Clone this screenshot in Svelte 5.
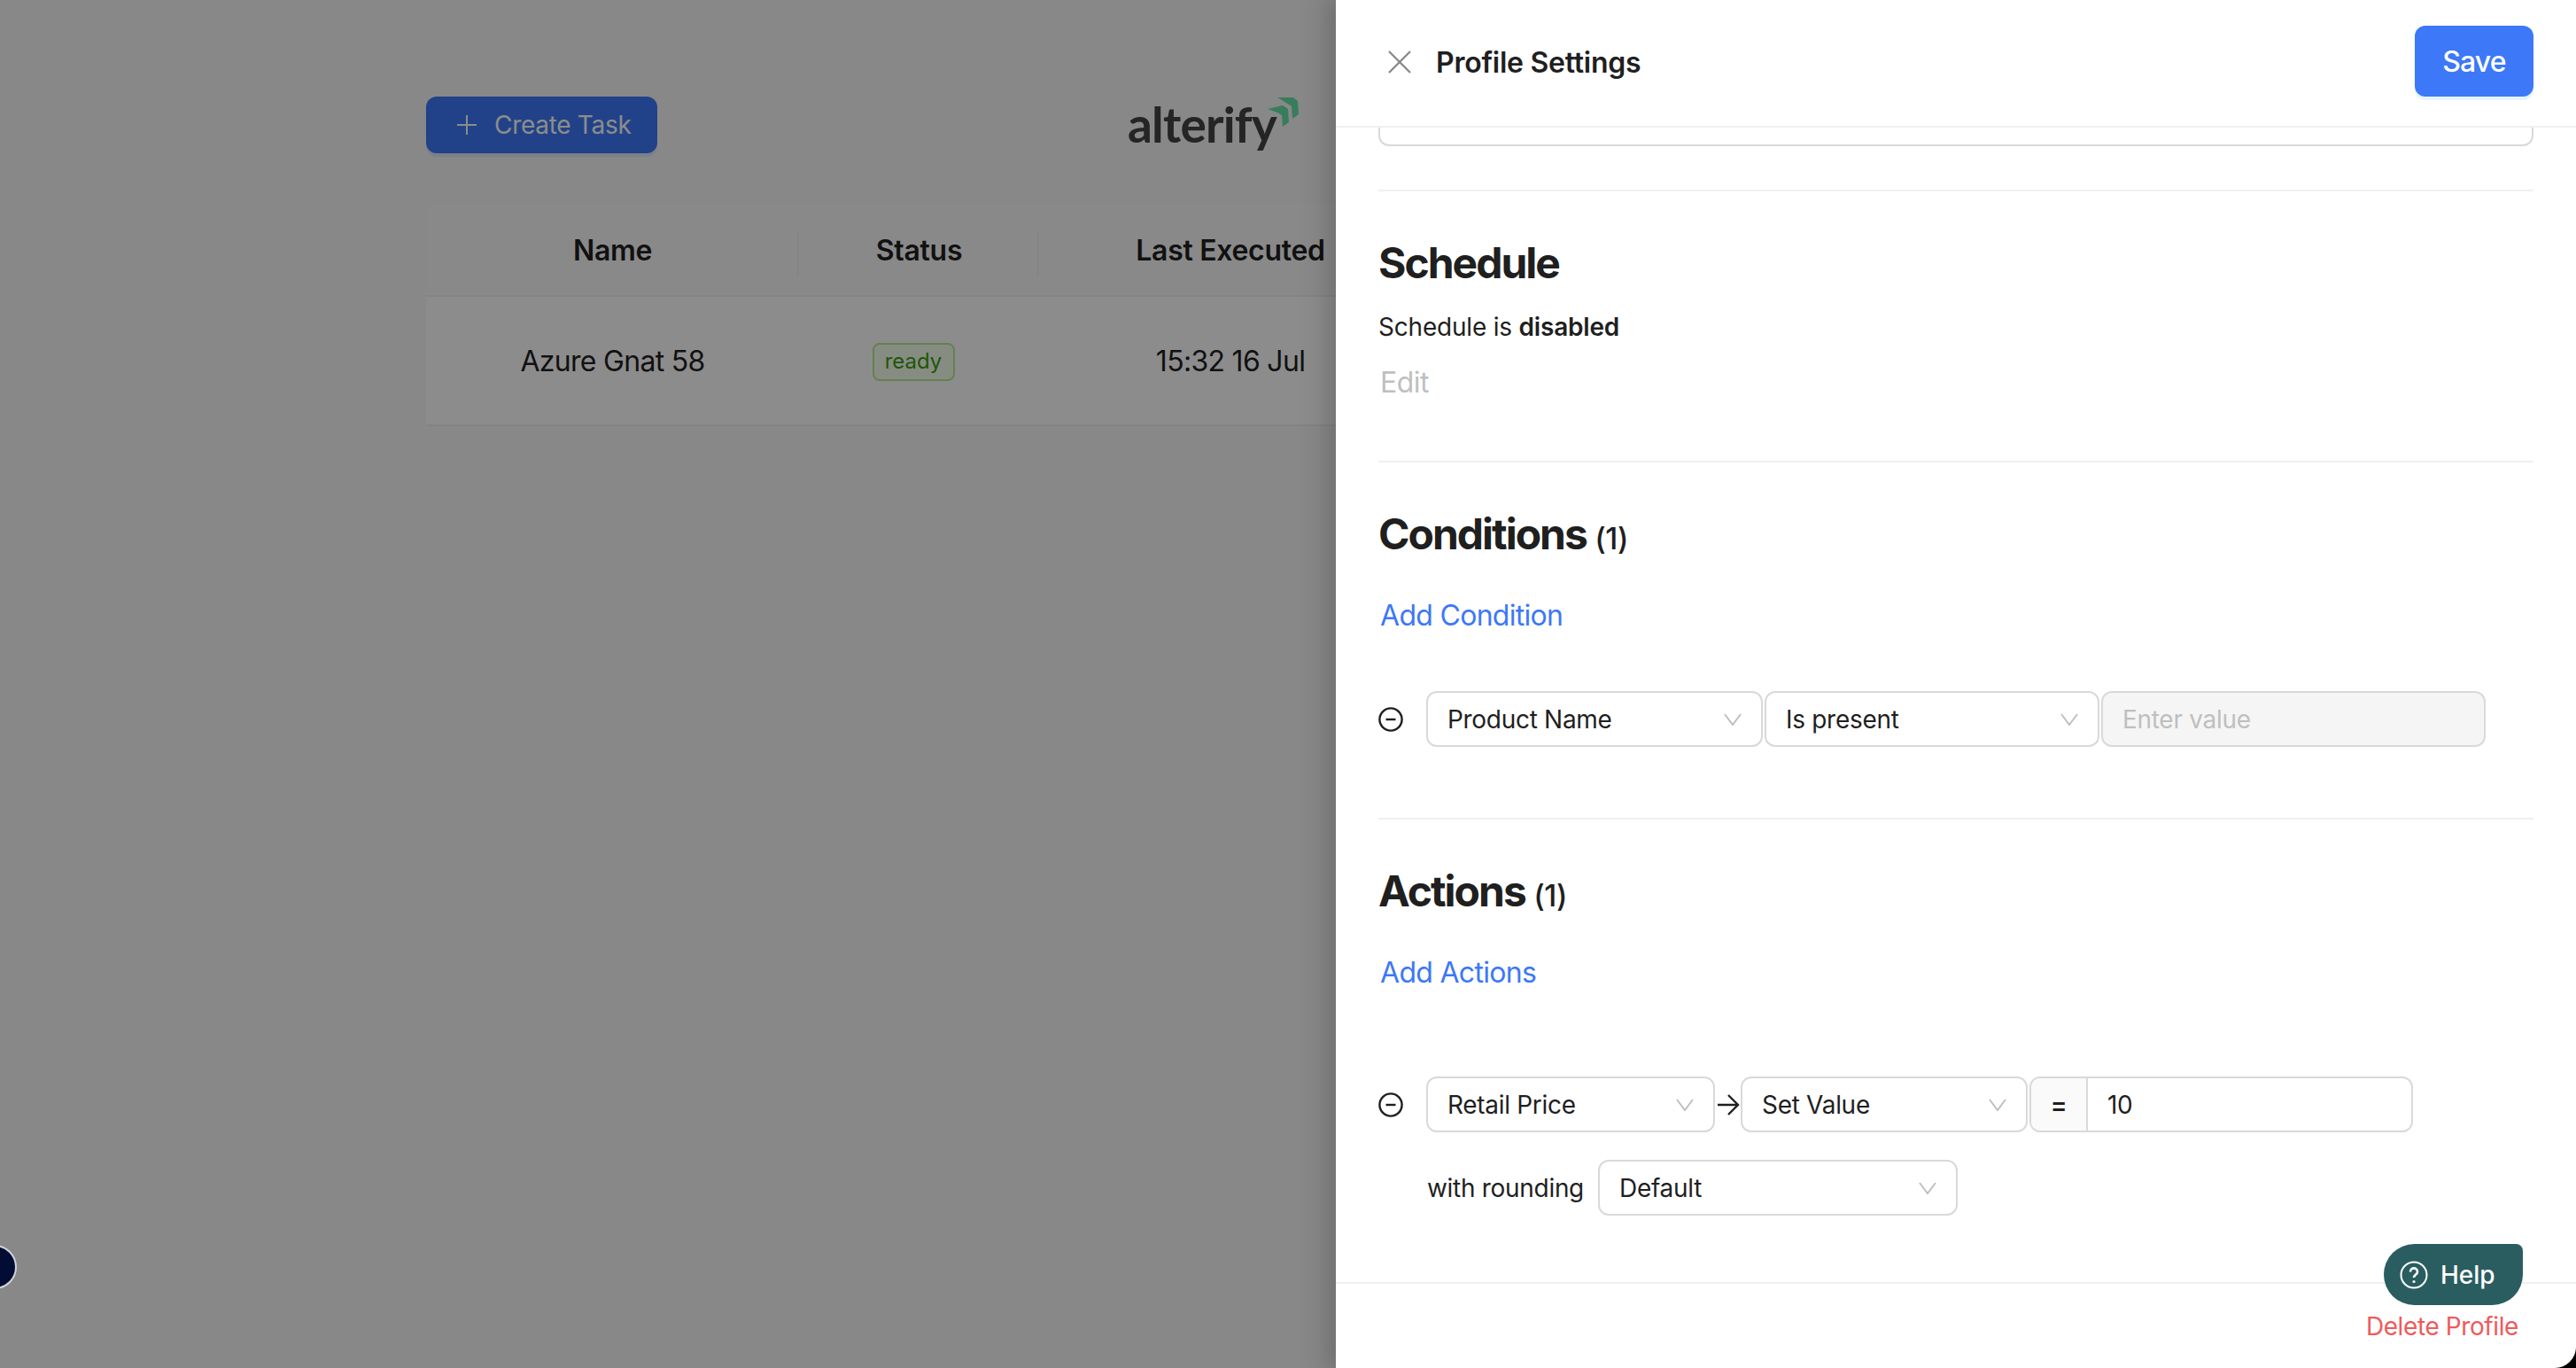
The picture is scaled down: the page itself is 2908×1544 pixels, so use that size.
<script lang="ts">
  const columns = ["Name", "Status", "Last Executed"];
</script>

{#snippet chevron()}
  <svg class="chev" viewBox="0 0 20 14" fill="none" stroke="currentColor" stroke-width="2"><path d="M1 1l9 12 9-12" /></svg>
{/snippet}

{#snippet select(label: string, cls: string)}
  <div class="field select {cls}">
    <span>{label}</span>
    {@render chevron()}
  </div>
{/snippet}

{#snippet minus()}
  <svg class="minus" viewBox="0 0 28 28" fill="none" stroke="#1f1f1f" stroke-width="2.4">
    <circle cx="14" cy="14" r="12.6" />
    <path d="M8.5 14h11" />
  </svg>
{/snippet}

<div class="page">
  <div class="behind">
    <div class="toolbar">
      <button class="create">
        <svg viewBox="0 0 24 24" fill="none" stroke="#fff" stroke-width="2"><path d="M12 1v22M1 12h22" /></svg>
        Create Task
      </button>
      <div class="logo">
        <span>alterify</span>
        <svg viewBox="0 0 36 36" fill="#66e3a7">
          <path d="M11 0h18l5 4 1 15-7 5-1-14-6-4z" />
          <path d="M0 13l17-4 6 4 1 15-7 5-1-13-5-3z" />
        </svg>
      </div>
    </div>
    <div class="table">
      <div class="thead">
        {#each columns as c, i}
          <div class="th" class:divided={i < 2}>{c}</div>
        {/each}
      </div>
      <div class="tbody">
        <div class="td">Azure Gnat 58</div>
        <div class="td status"><span class="badge">ready</span></div>
        <div class="td">15:32 16 Jul</div>
      </div>
    </div>
    <div class="mask"></div>
    <div class="bubble"></div>
  </div>

  <aside class="drawer">
    <header>
      <svg class="close" viewBox="0 0 26 26" fill="none" stroke="#8a8a8a" stroke-width="2.4"><path d="M1 1l24 24M25 1L1 25" /></svg>
      <h2>Profile Settings</h2>
      <button class="save">Save</button>
    </header>

    <div class="body">
      <div class="cutoff"></div>

      <section class="schedule">
        <h3>Schedule</h3>
        <p>Schedule is <b>disabled</b></p>
        <div class="edit">Edit</div>
      </section>

      <section class="conditions">
        <h3>Conditions <small>(1)</small></h3>
        <div class="link">Add Condition</div>
        <div class="row first">
          {@render minus()}
          {@render select("Product Name", "w380")}
          {@render select("Is present", "w378")}
          <div class="field disabled">Enter value</div>
        </div>
      </section>

      <section class="actions">
        <h3>Actions <small>(1)</small></h3>
        <div class="link">Add Actions</div>
        <div class="row second">
          {@render minus()}
          {@render select("Retail Price", "w326")}
          <svg class="arrow" viewBox="0 0 26 26" fill="none" stroke="#1f1f1f" stroke-width="2.4"><path d="M1 13h23M13 2l11 11-11 11" /></svg>
          {@render select("Set Value", "w324")}
          <div class="field group">
            <span class="addon">=</span>
            <span class="val">10</span>
          </div>
        </div>
        <div class="rounding">
          <span>with rounding</span>
          {@render select("Default", "w406")}
        </div>
      </section>
    </div>

    <footer>
      <span class="delete">Delete Profile</span>
    </footer>

    <button class="help">
      <svg viewBox="0 0 32 32" fill="none" stroke="#fff" stroke-width="2"><circle cx="16" cy="16" r="14.5" /><path d="M12 12.5c0-5.5 8-5.5 8 0 0 3-4 3-4 6.5" stroke-width="2.6" /><circle cx="16" cy="23.5" r="1.6" fill="#fff" stroke="none" /></svg>
      Help
    </button>
  </aside>
</div>

<style>
  :global(body) {
    background: #000;
    font-family: Inter, "Liberation Sans", sans-serif;
    color: #1f1f1f;
  }
  .page {
    display: flex;
    width: 2908px;
    height: 1544px;
    overflow: hidden;
  }
  .behind {
    position: relative;
    flex: 0 0 1508px;
    box-sizing: border-box;
    padding: 109px 0 0 481px;
    background: #f7f7f7;
    overflow: hidden;
  }
  .mask {
    position: absolute;
    inset: 0;
    background: rgba(0, 0, 0, 0.45);
  }
  .bubble {
    position: absolute;
    left: -31px;
    top: 1405px;
    width: 46px;
    height: 46px;
    border: 2px solid #cfd3de;
    border-radius: 50%;
    background: #030d33;
  }
  .toolbar {
    display: flex;
    height: 64px;
    gap: 531px;
  }
  .create {
    display: flex;
    align-items: center;
    gap: 19px;
    width: 261px;
    height: 64px;
    padding: 0 0 0 34px;
    border: none;
    border-radius: 12px;
    background: #3c78f8;
    box-shadow: 0 4px 0 rgba(5, 145, 255, 0.1);
    color: #fff;
    font: 400 28px Inter, sans-serif;
    letter-spacing: -0.3px;
    white-space: nowrap;
  }
  .create svg {
    width: 24px;
    height: 24px;
  }
  .logo {
    display: flex;
    align-items: flex-start;
    height: 80px;
    color: #444;
    font: 700 55px/64px Lato, sans-serif;
  }
  .logo span {
    margin-top: -1px;
    letter-spacing: -0.8px;
  }
  .logo svg {
    width: 36px;
    height: 36px;
    margin: 1px 0 0 -10px;
    flex: none;
  }
  .table {
    width: 1500px;
    margin-top: 57px;
    border-radius: 16px 16px 0 0;
    background: #fff;
  }
  .thead,
  .tbody {
    display: grid;
    grid-template-columns: 421px 271px 432px;
  }
  .thead {
    box-sizing: border-box;
    height: 105px;
    padding-top: 2px;
    align-items: center;
    background: #fafafa;
    border-bottom: 2px solid #f0f0f0;
    border-radius: 16px 16px 0 0;
  }
  .th {
    position: relative;
    text-align: center;
    font-weight: 600;
    font-size: 32px;
    letter-spacing: -0.3px;
  }
  .divided::after {
    content: "";
    position: absolute;
    right: 0;
    top: -2px;
    height: 50px;
    width: 2px;
    background: #f0f0f0;
  }
  .tbody {
    height: 144px;
    align-items: center;
    border-bottom: 2px solid #f0f0f0;
  }
  .td {
    text-align: center;
    font-size: 32px;
    letter-spacing: -0.7px;
  }
  .status {
    padding-right: 13px;
  }
  .badge {
    display: inline-block;
    box-sizing: border-box;
    width: 93px;
    height: 43px;
    border: 2px solid #b7eb8f;
    border-radius: 8px;
    background: #f6ffed;
    color: #389e0d;
    font-size: 24px;
    line-height: 38px;
    letter-spacing: 0;
  }

  .drawer {
    position: relative;
    display: flex;
    flex-direction: column;
    flex: 0 0 1400px;
    background: #fff;
    border-bottom-right-radius: 24px;
    box-shadow: -9px 0 28px 8px rgba(0, 0, 0, 0.1), -6px 0 16px rgba(0, 0, 0, 0.08);
  }
  header {
    display: flex;
    align-items: center;
    box-sizing: border-box;
    height: 144px;
    flex: none;
    padding: 0 48px 2px 59px;
    border-bottom: 2px solid #f0f0f0;
  }
  .close {
    width: 26px;
    height: 26px;
    margin-right: 28px;
  }
  h2 {
    flex: 1;
    margin: 0;
    font-size: 32px;
    font-weight: 600;
    letter-spacing: -0.25px;
  }
  .save {
    width: 134px;
    height: 80px;
    margin-bottom: 2px;
    border: none;
    border-radius: 12px;
    background: #3c78f8;
    box-shadow: 0 4px 0 rgba(5, 145, 255, 0.1);
    color: #fff;
    font: 500 32px Inter, sans-serif;
    letter-spacing: -0.8px;
  }
  .body {
    flex: 1;
    padding: 0 48px;
    overflow: hidden;
  }
  .cutoff {
    height: 19px;
    border: 2px solid #d9d9d9;
    border-top: none;
    border-radius: 0 0 12px 12px;
  }
  section {
    border-top: 2px solid #f0f0f0;
  }
  .schedule {
    height: 306px;
    margin-top: 49px;
    box-sizing: border-box;
  }
  .conditions {
    height: 403px;
    box-sizing: border-box;
  }
  h3 {
    margin: 52px 0 0;
    font-size: 48px;
    line-height: 58px;
    font-weight: 700;
    letter-spacing: -2px;
  }
  h3 small {
    font-size: 34px;
    font-weight: 500;
    letter-spacing: -0.5px;
  }
  .schedule p {
    margin: 23px 0 0;
    font-size: 28px;
    line-height: 40px;
    letter-spacing: -0.2px;
  }
  .schedule b {
    font-weight: 600;
  }
  .edit {
    margin: 23px 0 0 2px;
    color: #bfbfbf;
    font-size: 32px;
    line-height: 40px;
    letter-spacing: -0.5px;
  }
  .link {
    margin: 38px 0 0 2px;
    color: #3c78f8;
    font-size: 32px;
    line-height: 40px;
    letter-spacing: -0.7px;
  }
  .row {
    display: flex;
    align-items: center;
    gap: 2px;
  }
  .first {
    margin-top: 65px;
  }
  .second {
    margin-top: 97px;
  }
  .minus {
    width: 28px;
    height: 28px;
    margin-right: 24px;
    flex: none;
  }
  .field {
    display: flex;
    align-items: center;
    box-sizing: border-box;
    height: 63px;
    padding: 0 22px;
    border: 2px solid #d9d9d9;
    border-radius: 12px;
    font-size: 28px;
    letter-spacing: -0.3px;
    background: #fff;
  }
  .select {
    justify-content: space-between;
  }
  .chev {
    width: 20px;
    height: 14px;
    color: #bfbfbf;
  }
  .w380 { width: 380px; }
  .w378 { width: 378px; }
  .w326 { width: 326px; }
  .w324 { width: 324px; }
  .w406 { width: 406px; }
  .disabled {
    width: 434px;
    background: #f5f5f5;
    color: #bfbfbf;
  }
  .arrow {
    width: 26px;
    height: 26px;
    flex: none;
    margin-right: -1px;
  }
  .group {
    width: 433px;
    padding: 0;
    overflow: hidden;
  }
  .addon {
    display: flex;
    align-items: center;
    justify-content: center;
    box-sizing: border-box;
    width: 64px;
    height: 100%;
    border-right: 2px solid #d9d9d9;
    background: #fafafa;
    font-weight: 600;
  }
  .val {
    padding-left: 22px;
  }
  .rounding {
    display: flex;
    align-items: center;
    gap: 16px;
    margin: 31px 0 0 55px;
    font-size: 28px;
    letter-spacing: -0.3px;
  }
  footer {
    display: flex;
    align-items: center;
    justify-content: flex-end;
    box-sizing: border-box;
    height: 97px;
    flex: none;
    padding: 0 65px 0 0;
    border-top: 2px solid #f0f0f0;
  }
  .delete {
    color: #f05a5a;
    font-size: 28px;
    letter-spacing: -0.4px;
  }
  .help {
    position: absolute;
    left: 1183px;
    top: 1404px;
    display: flex;
    align-items: center;
    gap: 14px;
    width: 157px;
    height: 69px;
    padding: 0 0 0 18px;
    border: none;
    border-radius: 36px 8px 36px 36px;
    background: #2a5d60;
    color: #fff;
    font: 500 28px Inter, sans-serif;
  }
  .help svg {
    width: 32px;
    height: 32px;
  }
</style>
